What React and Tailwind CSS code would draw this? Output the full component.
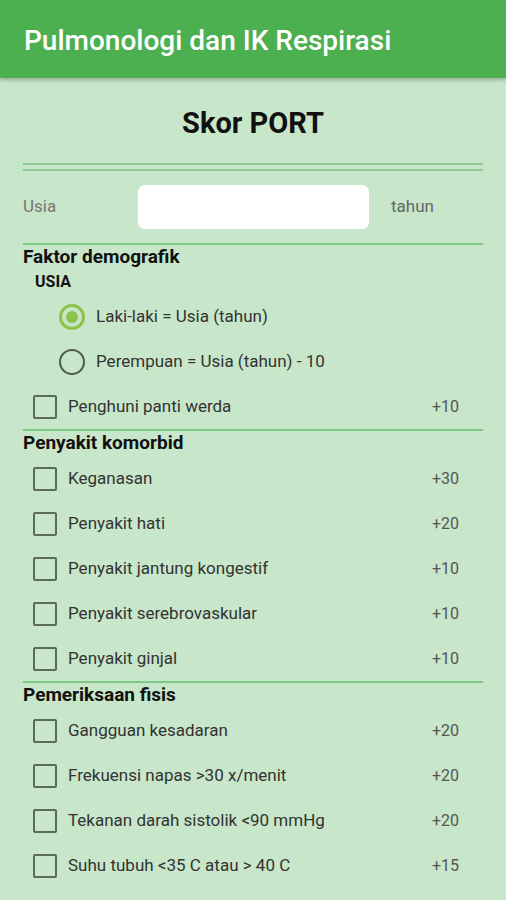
import React, { useState } from "react";

const sections = [
    {
        title: "Penyakit komorbid",
        items: [
            ["Keganasan", "+30"],
            ["Penyakit hati", "+20"],
            ["Penyakit jantung kongestif", "+10"],
            ["Penyakit serebrovaskular", "+10"],
            ["Penyakit ginjal", "+10"],
        ],
    },
    {
        title: "Pemeriksaan fisis",
        items: [
            ["Gangguan kesadaran", "+20"],
            ["Frekuensi napas >30 x/menit", "+20"],
            ["Tekanan darah sistolik <90 mmHg", "+20"],
            ["Suhu tubuh <35 C atau > 40 C", "+15"],
        ],
    },
];

const CheckRow = ({ label, score }) => {
    const [checked, setChecked] = useState(false);
    return (
        <div
            className="h-[45px] flex items-center pl-[10px] pr-[24px] cursor-pointer"
            onClick={() => setChecked(!checked)}
        >
            <span className={`w-[24px] h-[24px] rounded-[2px] border-2 border-[#5b6b5b] ${checked ? "bg-[#8BC34A] border-[#8BC34A]" : ""}`}></span>
            <span className="ml-[11px] flex-1 text-[17px] text-[#333]">{label}</span>
            <span className="text-[16px] text-[#555]">{score}</span>
        </div>
    );
};

const Radio = ({ selected, label, onClick }) => (
    <div className="h-[45px] flex items-center pl-[36px] cursor-pointer" onClick={onClick}>
        {selected ? (
            <span className="w-[26px] h-[26px] rounded-full border-[3px] border-[#8BC34A] flex items-center justify-center">
                <span className="w-[12px] h-[12px] rounded-full bg-[#8BC34A]"></span>
            </span>
        ) : (
            <span className="w-[26px] h-[26px] rounded-full border-2 border-[#4f5a4f]"></span>
        )}
        <span className="ml-[11px] text-[17px] text-[#333]">{label}</span>
    </div>
);

const Line = () => <div className="h-[2px] bg-[#81C784]"></div>;

export default function App() {
    const [gender, setGender] = useState("male");

    return (
        <div className="w-[506px] h-[900px] overflow-hidden bg-[#C8E6C9]" style={{ fontFamily: "Roboto, 'Liberation Sans', sans-serif" }}>
            <header className="h-[78px] bg-[#4CAF50] px-6 flex items-center shadow-[0_2px_4px_rgba(0,0,0,0.25)] relative z-10">
                <h1 className="text-[28px] font-medium text-white pt-[3px]">Pulmonologi dan IK Respirasi</h1>
            </header>

            <div className="px-[23px]">
                <h2 className="pt-[30px] h-[60px] leading-[30px] text-center text-[29px] font-bold text-[#111]">Skor PORT</h2>

                {/* double divider */}
                <div className="mt-[25px] flex flex-col gap-[4px]">
                    <div className="h-[2px] bg-[#8fcb92]"></div>
                    <div className="h-[2px] bg-[#8fcb92]"></div>
                </div>

                {/* age input */}
                <div className="mt-[14px] h-[44px] flex items-center">
                    <span className="w-[115px] text-[17px] text-[#777]">Usia</span>
                    <input className="w-[231px] h-[44px] bg-white rounded-[7px] outline-none px-3 text-[17px]" />
                    <span className="ml-[22px] text-[17px] text-[#666]">tahun</span>
                </div>

                <div className="mt-[14px]"><Line /></div>

                <div className="h-[25px] flex items-center text-[19px] font-bold text-[#111]">Faktor demografik</div>
                <div className="h-[24px] flex items-center pl-[12px] text-[16px] font-bold text-[#111]">USIA</div>
                <Radio selected={gender === "male"} label="Laki-laki = Usia (tahun)" onClick={() => setGender("male")} />
                <Radio selected={gender === "female"} label="Perempuan = Usia (tahun) - 10" onClick={() => setGender("female")} />
                <CheckRow label="Penghuni panti werda" score="+10" />

                {sections.map((s) => (
                    <div key={s.title}>
                        <Line />
                        <div className="h-[25px] flex items-center text-[19px] font-bold text-[#111]">{s.title}</div>
                        {s.items.map(([label, score]) => (
                            <CheckRow key={label} label={label} score={score} />
                        ))}
                    </div>
                ))}
            </div>
        </div>
    );
}
